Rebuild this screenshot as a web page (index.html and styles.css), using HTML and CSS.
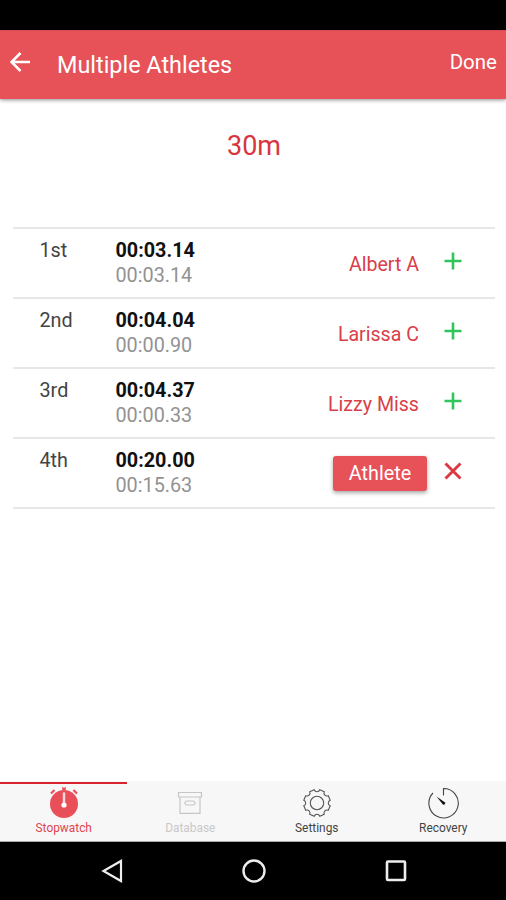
FILE: index.html
```html
<!DOCTYPE html>
<html lang="en">
<head>
<meta charset="utf-8">
<title>Multiple Athletes</title>
<link rel="stylesheet" href="styles.css">
</head>
<body>
<div class="status"></div>
<header class="bar">
  <svg class="back" width="20" height="20" viewBox="0 0 20 20"><path d="M20 10H2M10.500 1L1.500 10l9 9" fill="none" stroke="#fff" stroke-width="2.600"/></svg>
  <h1 class="title">Multiple Athletes</h1>
  <span class="done">Done</span>
</header>
<main class="content">
  <h2 class="distance">30m</h2>
  <ul class="list">
    <li class="row"><span class="place">1st</span><div class="times"><b>00:03.14</b><span>00:03.14</span></div><span class="name">Albert A</span><svg class="mark" width="18" height="18" viewBox="0 0 18 18"><path d="M9 .5v17M.5 9h17" stroke="#2fc75a" stroke-width="2.600"/></svg></li>
    <li class="row"><span class="place">2nd</span><div class="times"><b>00:04.04</b><span>00:00.90</span></div><span class="name">Larissa C</span><svg class="mark" width="18" height="18" viewBox="0 0 18 18"><path d="M9 .5v17M.5 9h17" stroke="#2fc75a" stroke-width="2.600"/></svg></li>
    <li class="row"><span class="place">3rd</span><div class="times"><b>00:04.37</b><span>00:00.33</span></div><span class="name">Lizzy Miss</span><svg class="mark" width="18" height="18" viewBox="0 0 18 18"><path d="M9 .5v17M.5 9h17" stroke="#2fc75a" stroke-width="2.600"/></svg></li>
    <li class="row"><span class="place">4th</span><div class="times"><b>00:20.00</b><span>00:15.63</span></div><button class="athlete">Athlete</button><svg class="mark" width="18" height="18" viewBox="0 0 18 18"><path d="M1.500 1.500l15 15M16.500 1.500l-15 15" stroke="#dc3a42" stroke-width="2.900"/></svg></li>
  </ul>
</main>
<nav class="tabs">
  <div class="tab active">
    <svg width="32" height="32" viewBox="-16 -16 32 32"><circle cy="1" r="14" fill="#e84f58"/><path d="M0-12v-3.500M-2-14.500h4M-13-9.500l3.500-3.500M13-9.500l-3.500-3.500" stroke="#e84f58" stroke-width="2.200" fill="none"/><path d="M0-10.500V1" stroke="#fbdcde" stroke-width="2.400"/><circle cy="2" r="2.600" fill="#fff"/></svg>
    <span>Stopwatch</span>
  </div>
  <div class="tab muted">
    <svg width="32" height="32" viewBox="-16 -16 32 32"><path d="M-11.500-10.500h23v4.500h-23zM-10-6V10.300H10V-6M-3-2h6a1.500 1.500 0 0 1 0 4h-6a1.500 1.500 0 0 1 0-4z" fill="none" stroke="#c6c6c6" stroke-width="1.200"/></svg>
    <span>Database</span>
  </div>
  <div class="tab">
    <svg width="32" height="32" viewBox="-16 -16 32 32"><g fill="none" stroke="#555" stroke-width="1.100"><path d="M-2.800-13.200A3 3 0 0 0 2.800-13.200L7.300-11.300A3 3 0 0 0 11.300-7.300L13.200-2.800A3 3 0 0 0 13.200 2.800L11.300 7.300A3 3 0 0 0 7.300 11.300L2.800 13.200A3 3 0 0 0-2.800 13.200L-7.300 11.300A3 3 0 0 0-11.300 7.300L-13.200 2.800A3 3 0 0 0-13.200-2.800L-11.300-7.300A3 3 0 0 0-7.300-11.300Z"/><circle r="6.700"/></g></svg>
    <span>Settings</span>
  </div>
  <div class="tab">
    <svg width="32" height="32" viewBox="-16.500 -16 32 32"><path d="M0-7.500V-14.500A14.700 14.700 0 1 1-10.500-10" fill="none" stroke="#444" stroke-width="1.100"/><path d="M-7-6.500L1.200-.8A1.300 1.300 0 0 1-.8 1.200Z" fill="#111"/></svg>
    <span>Recovery</span>
  </div>
</nav>
<footer class="system">
  <svg width="22" height="24" viewBox="0 0 22 24"><path d="M20 2v20L2.500 12z" fill="none" stroke="#eee" stroke-width="2.200"/></svg>
  <svg width="24" height="24" viewBox="0 0 24 24"><circle cx="12" cy="12" r="10.500" fill="none" stroke="#eee" stroke-width="2.400"/></svg>
  <svg width="22" height="24" viewBox="0 0 22 24"><rect x="2" y="2.500" width="18" height="18.500" rx="1" fill="none" stroke="#eee" stroke-width="2.600"/></svg>
</footer>
</body>
</html>
```
FILE: styles.css
```css
* { box-sizing: border-box; }
body {
  margin: 0;
  height: 900px;
  display: flex;
  flex-direction: column;
  overflow: hidden;
  background: #fff;
  font-family: Roboto, "Liberation Sans", sans-serif;
}
svg { display: block; flex: none; }
.status { height: 30px; background: #000; }
.bar {
  height: 69px;
  display: flex;
  align-items: center;
  padding: 0 9px 0 10px;
  background: #e75158;
  border-top: 1px solid #d94950;
  color: #fff;
  box-shadow: 0 1px 4px rgba(0, 0, 0, .45);
}
.back { margin-bottom: 6px; }
.title { margin: 0 0 1px 27px; font-size: 23.400px; font-weight: 400; line-height: 30px; }
.done { margin-left: auto; margin-bottom: 7px; font-size: 20.500px; line-height: 26px; }
.content { flex: 1; padding: 0 11px 0 13px; }
.distance {
  margin: 30px 0 0;
  height: 98px;
  text-align: center;
  font-size: 27px;
  font-weight: 400;
  line-height: 34px;
  color: #d8353e;
}
.list { list-style: none; margin: 0; padding: 0; border-top: 2px solid #e7e7e7; }
.row {
  height: 70.100px;
  display: flex;
  align-items: center;
  padding-right: 33px;
  border-bottom: 2px solid #e7e7e7;
}
.place { width: 102.500px; padding-left: 26.500px; align-self: flex-start; padding-top: 9px; font-size: 19.800px; line-height: 25px; color: #444; }
.times { align-self: flex-start; padding-top: 10px; font-size: 19.800px; line-height: 24.500px; }
.times b, .times span { display: block; }
.times b { color: #111; font-weight: 700; }
.times span { color: #929292; }
.name { margin-left: auto; padding-top: 3px; font-size: 19.600px; color: #d8404a; }
.mark { margin: 0 0 4px 25px; }
.athlete {
  margin-left: auto;
  margin-right: -8px;
  margin-top: 1px;
  width: 94px;
  height: 35px;
  padding: 0;
  border: 0;
  border-radius: 3px;
  background: #e75158;
  color: #fff;
  font: 400 19.800px Roboto, sans-serif;
  box-shadow: 0 2px 4px rgba(0, 0, 0, .35);
}
.tabs { height: 61px; display: flex; padding-top: 1px; background: #f7f7f7; border-bottom: 1px solid #aaa; }
.tab {
  flex: 1;
  display: flex;
  flex-direction: column;
  align-items: center;
  padding: 3px 0 0 1px;
  border-top: 2px solid #f7f7f7;
  font-size: 11.900px;
  line-height: 18px;
  color: #444;
}
.active { border-top-color: #d8242e; color: #e04650; }
.muted { color: #c9c9c9; }
.system {
  height: 58px;
  display: flex;
  justify-content: center;
  align-items: center;
  gap: 119px;
  padding: 0 0 0 2px;
  background: #000;
}
```
